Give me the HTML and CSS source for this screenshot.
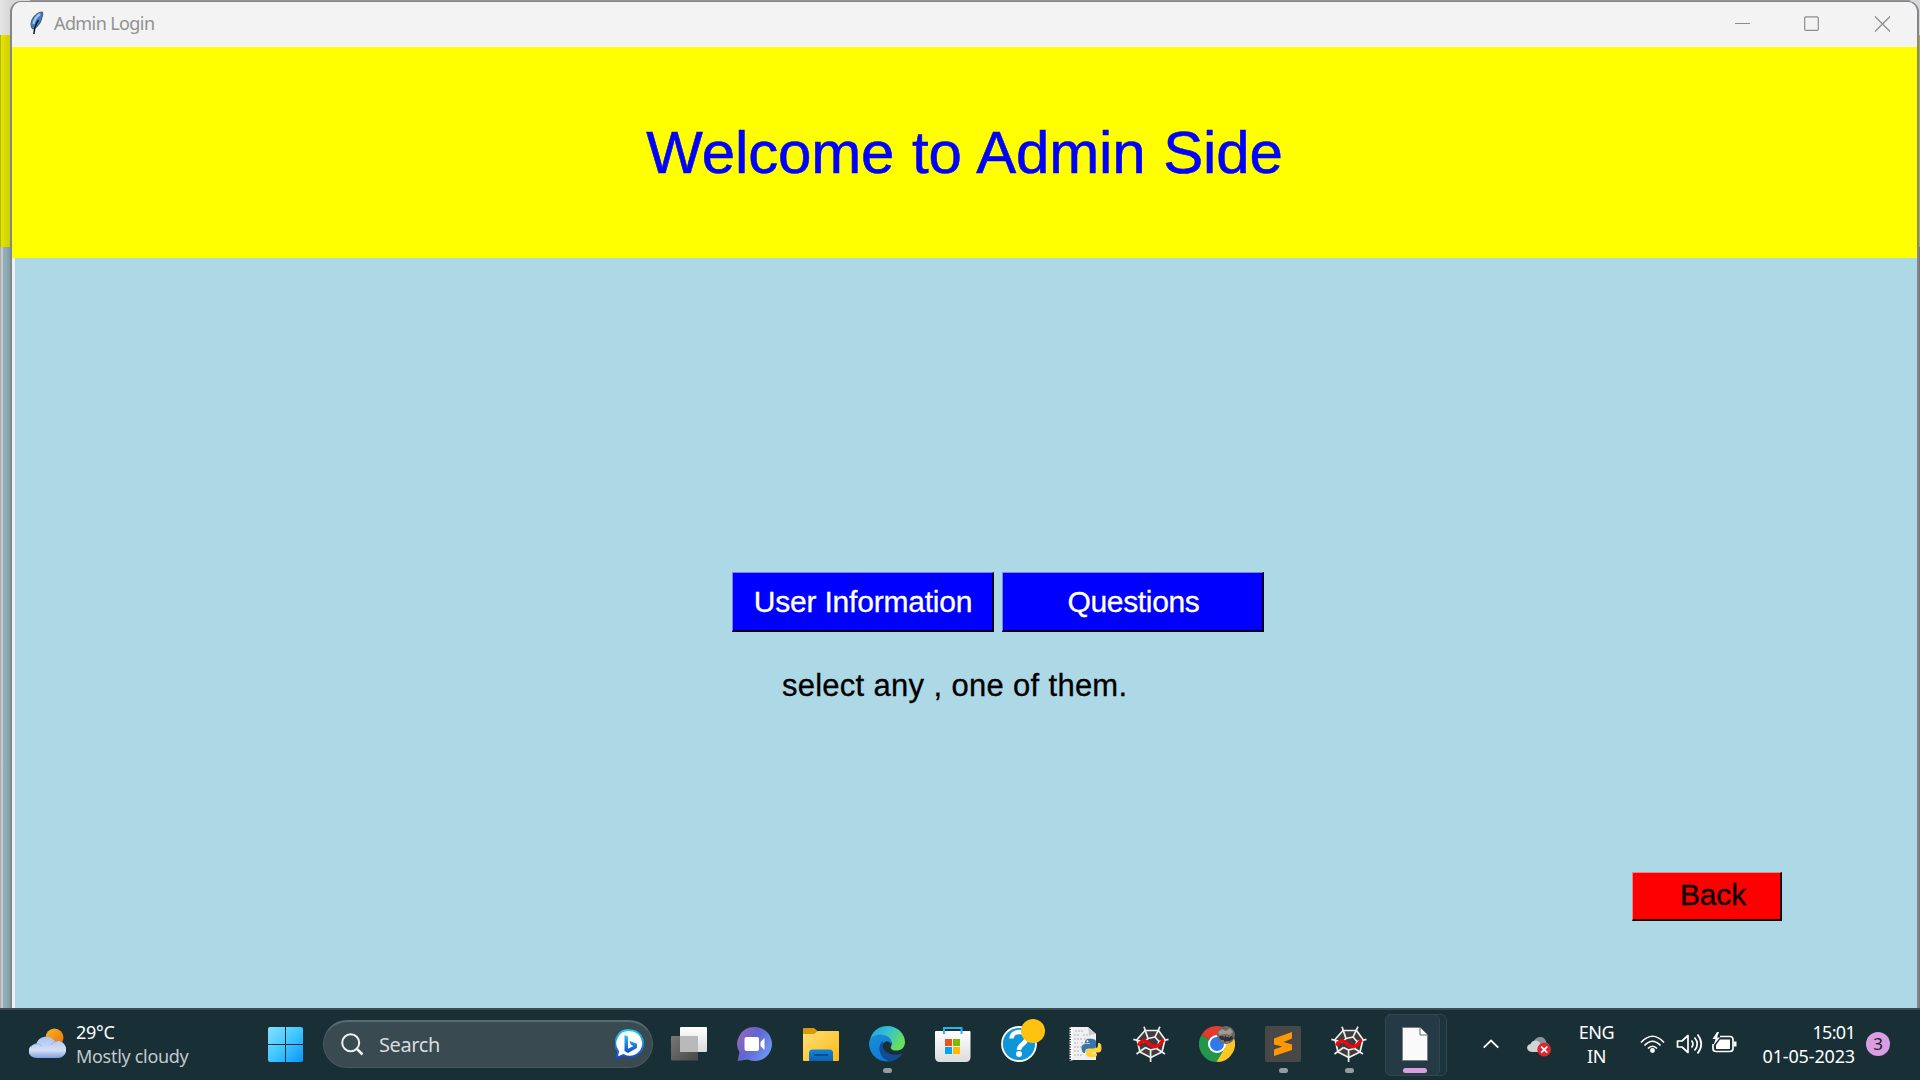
FILE: index.html
```html
<!DOCTYPE html>
<html lang="en">
<head>
<meta charset="utf-8">
<title>Admin Login</title>
<link rel="stylesheet" href="styles.css">
</head>
<body>
<svg class="defs" width="0" height="0" aria-hidden="true">
  <defs>
    <linearGradient id="sun" x1="0" y1="0" x2="1" y2="1"><stop offset="0" stop-color="#f7b925"/><stop offset="1" stop-color="#ee6a0a"/></linearGradient>
    <linearGradient id="cloud" x1="0" y1="0" x2="0" y2="1"><stop offset="0" stop-color="#a9c3f3"/><stop offset=".65" stop-color="#d3def5"/><stop offset="1" stop-color="#7f9de0"/></linearGradient>
    <linearGradient id="win" x1="0" y1="0" x2="35" y2="35" gradientUnits="userSpaceOnUse"><stop offset="0" stop-color="#86e0ff"/><stop offset=".5" stop-color="#3fc8ff"/><stop offset="1" stop-color="#0a94fb"/></linearGradient>
    <linearGradient id="bing" x1="0" y1="0" x2="0" y2="1"><stop offset="0" stop-color="#22c8e8"/><stop offset="1" stop-color="#1747cf"/></linearGradient>
    <linearGradient id="chat" x1="0" y1="0" x2="1" y2=".6"><stop offset="0" stop-color="#a56bb5"/><stop offset=".5" stop-color="#6264cf"/><stop offset="1" stop-color="#6d93ee"/></linearGradient>
    <linearGradient id="folder" x1="0" y1="0" x2="1" y2="1"><stop offset="0" stop-color="#ffdf78"/><stop offset="1" stop-color="#fdb913"/></linearGradient>
    <linearGradient id="pocket" x1="0" y1="0" x2="0" y2="1"><stop offset="0" stop-color="#1484dc"/><stop offset="1" stop-color="#0b62b4"/></linearGradient>
    <linearGradient id="edgeTop" x1="0" y1="0" x2="1" y2=".5"><stop offset="0" stop-color="#1c9ee0"/><stop offset=".5" stop-color="#35c1d0"/><stop offset="1" stop-color="#68e15a"/></linearGradient>
    <linearGradient id="edgeLeft" x1="0" y1="0" x2=".6" y2="1"><stop offset="0" stop-color="#1b8fd2"/><stop offset="1" stop-color="#0c78da"/></linearGradient>
    <linearGradient id="light" x1="0" y1="0" x2="0" y2="1"><stop offset="0" stop-color="#fff"/><stop offset="1" stop-color="#dcdcdc"/></linearGradient>
    <linearGradient id="dark" x1="0" y1="0" x2="1" y2="1"><stop offset="0" stop-color="#777"/><stop offset="1" stop-color="#484848"/></linearGradient>
    <symbol id="spyder" viewBox="0 0 36 36">
      <path d="M11.500 4.500h14l6.500 9-3 12.500-11.200 5.500L7 26 4 13.500z" fill="#403c3d"/>
      <g fill="none" stroke="#f0eeee" stroke-width="1.700" stroke-linejoin="round">
        <path d="M12 4.500h13.500l6.500 9-3 12.500-11.200 5.500L7 26 4 13.500zM15 12.500l7-1.500"/>
        <path d="M11 .7l4 11.800L11.500 16M27 .7l-5 10.300 4 4.500M35.500 13.300l-9.500 2.200-2.500 7.500M32 28l-8.500-5.500-5.900 1.500M17.600 36V24l-5.100-2.500M3.500 28l9-6.500M.3 13.300l11 2.700"/>
      </g>
      <path d="M5.300 19.500C10 12 13 15 17 18.500s8 2 10-.5 1.500-3 4-4" fill="none" stroke="#f50505" stroke-width="3.400"/>
    </symbol>
  </defs>
</svg>

<div class="desktop">
  <div class="rear"><div class="rear-title"></div><div class="rear-band"></div><div class="rear-body"></div></div>
  <main class="window">
    <header class="titlebar">
      <svg class="feather" width="14" height="24" viewBox="0 0 14 24"><path d="M12.500 1C8 1 2.500 5 1.200 11.500c-.5 3 .3 5.500 1.500 6.500 4-1 7.500-5 8.500-9 .8-3 2-5 1.300-8z" fill="#3f7fc8" stroke="#4a525a"/><path d="M10 3C6.500 5.500 4 9 3.500 13" fill="none" stroke="#9cc8f2" stroke-width="2.200"/><path d="M8.500 9C6 12.500 4.500 16 3.900 23" fill="none" stroke="#11161c" stroke-width="1.500"/></svg>
      <span class="caption">Admin Login</span>
      <svg class="controls" width="156" height="16" viewBox="0 0 156 16" fill="none" stroke="#8c8c8c" stroke-width="1.200"><path d="M0 7.500h15"/><rect x="69.700" y=".8" width="13.600" height="13.600" rx="1.200"/><path d="M140 .5l15 15m0-15l-15 15"/></svg>
    </header>
    <section class="banner"><h1>Welcome to Admin Side</h1></section>
    <section class="content">
      <div class="choices"><button>User Information</button><button class="questions">Questions</button></div>
      <p class="hint">select any , one of them.</p>
      <button class="back">Back</button>
    </section>
  </main>
</div>

<footer class="taskbar">
  <div class="weather">
    <svg width="37" height="32" viewBox="0 0 37 32"><circle cx="25.500" cy="9.500" r="9" fill="url(#sun)"/><path d="M8 30a8 7 0 0 1-.8-14A10.500 10.500 0 0 1 26 13.500 8.500 8.500 0 1 1 28 30z" fill="url(#cloud)"/><path d="M2 19c3-4 8-4 11-1M22 17c2-3 4-3.500 6-3.500" fill="none" stroke="#8eace8"/></svg>
    <div class="weather-text"><span>29°C</span><span class="muted">Mostly cloudy</span></div>
  </div>
  <svg class="start" width="35" height="35" viewBox="0 0 35 35" fill="url(#win)"><path d="M2 0h15v17H0V2q0-2 2-2zM18 0h15q2 0 2 2v15H18zM0 18h17v17H2q-2 0-2-2zM18 18h17v15q0 2-2 2H18z"/></svg>
  <div class="search">
    <svg width="23" height="23" viewBox="0 0 23 23" fill="none" stroke="#eef1f2" stroke-width="2"><circle cx="9.700" cy="9.700" r="8.500"/><path d="M16 16l5.500 5.500" stroke-width="2.500"/></svg>
    <span>Search</span>
    <svg class="bing" width="30" height="31" viewBox="0 0 30 31"><path d="M15 1.200a13.300 13.300 0 1 1-6.500 25L1.500 29l1.600-6.500A13.300 13.300 0 0 1 15 1.200z" fill="#fff" stroke="url(#bing)" stroke-width="2"/><path d="M9.500 6l3.500 1.500v12.200L18.500 17l-2.600-1.300-1.500-3.700 7.600 2.700v4.200L13 24l-3.500-2z" fill="url(#bing)"/></svg>
  </div>
  <nav class="apps">
    <div class="app"><svg width="36" height="36" viewBox="0 0 36 36"><rect x="0" y="10" width="27" height="24.500" rx="1" fill="url(#dark)"/><rect x="9" y="1" width="27" height="25" rx="1" fill="url(#light)"/><path d="M9 10h18v16H9z" fill="#b9b9b9"/></svg></div>
    <div class="app"><svg width="36" height="36" viewBox="0 0 36 36"><path d="M18 1a17 17 0 1 1-7 32.500L.5 35l2-8.500A17 17 0 0 1 18 1z" fill="url(#chat)"/><rect x="7.500" y="11" width="14.500" height="14" rx="2" fill="#fff"/><path d="M23.500 16l4-4v12l-4-4z" fill="#fff"/></svg></div>
    <div class="app"><svg width="36" height="36" viewBox="0 0 36 36"><path d="M0 3q0-1 1-1h10l4 3.500V12H0z" fill="#d99a05"/><path d="M0 8h11l4-3h20q1 0 1 1v28q0 1-1 1H1q-1 0-1-1z" fill="url(#folder)"/><path d="M6 35V27q0-3.500 3.500-3.500h17Q30 23.500 30 27v8z" fill="url(#pocket)"/><path d="M11 29h14" stroke="#064681" stroke-width="1.600"/></svg></div>
    <div class="app"><svg width="36" height="36" viewBox="0 0 36 36"><path d="M1 14C3 5 10 0 18 0c11 0 18 8 18 16 0 6-4 8.500-9 8.500-4 0-6-2-5-4 2-3 0-9-6-10z" fill="url(#edgeTop)"/><path d="M0 18C0 12 5 8.500 11 8.500c7 0 11.500 4 11.500 8l-1 1c-3-5-9-1-8.500 5 .5 8 8 11.500 14 10.500A18 18 0 0 1 0 18z" fill="url(#edgeLeft)"/><path d="M14 15c-6 4-5 17 7 20.500 5-.5 10-4 12.500-8.500-7 4-18 1-19.500-6-.5-2-.3-4 0-6z" fill="#104d93"/></svg><i class="dot"></i></div>
    <div class="app"><svg width="36" height="36" viewBox="0 0 36 36"><path d="M0 6q0-1 1-1h33.500q1 0 1 1v25q0 5-5 5H5q-5 0-5-5z" fill="url(#light)"/><path d="M9 8V2h17.500v6" fill="none" stroke="#29b4ea" stroke-width="2"/><path d="M10 13h7v7h-7z" fill="#f25022"/><path d="M18 13h7v7h-7z" fill="#7fba00"/><path d="M10 21h7v7h-7z" fill="#00a4ef"/><path d="M18 21h7v7h-7z" fill="#ffb900"/></svg></div>
    <div class="app"><svg class="spill" width="36" height="36" viewBox="0 0 36 36"><circle cx="18" cy="18" r="17" fill="#0e96d8" stroke="#fff" stroke-width="1.800"/><path d="M10.500 12.500C11 3.500 25.500 4 25.500 12c0 6-7.500 6-7.500 12" fill="none" stroke="#fff" stroke-width="4.500"/><circle cx="18" cy="28" r="3" fill="#fff"/><circle cx="32" cy="5" r="12" fill="#ffc20e"/></svg></div>
    <div class="app"><svg width="36" height="36" viewBox="0 0 36 36"><path d="M4 1h17l8 7v26H4z" fill="#f0f0f0"/><path d="M21 1l8 7-7 1z" fill="#ccc"/><path d="M4 1.500v33" stroke="#fff" stroke-width="3" stroke-dasharray="1.500 1"/><path d="M8 5h9M7 9h6m3 0h7M7 13h8m2 0h7M7 17h4m3 0h5M7 21h9M7 25h6m2 0h4M7 29h8" stroke="#b5b5b5" stroke-width="1.200" stroke-dasharray="2 1"/><path d="M18 20.500V16q0-3 4.500-3.200c5 0 6.500 1 6.500 3.200v4q0 3-3 3h-6q-2 0-2 4-3.500 0-3.500-5 0-3.500 3.500-4h5v-.8h-5" fill="#3776a8"/><path d="M31 17c3 0 3.500 2 3.500 5s-1 4.500-3.500 4.500h-6v1h5V29c0 1.500-2 2.300-5.500 2.300S19 30 19 28v-3q0-2.500 2.500-2.500h6Q31 22 31 19z" fill="#ffd43b"/><circle cx="20.500" cy="15.200" r="1" fill="#fff"/></svg></div>
    <div class="app"><svg width="36" height="36"><use href="#spyder"/></svg></div>
    <div class="app"><svg width="36" height="36" viewBox="0 0 36 36"><path d="M18 18L2.400 9A18 18 0 0 1 33.600 9z" fill="#e33b2e"/><path d="M18 18v18A18 18 0 0 1 2.400 9z" fill="#23964b"/><path d="M18 18L33.600 9A18 18 0 0 1 18 36l7.500-14z" fill="#fcc624"/><path d="M18 36l8-14-8-4z" fill="#23964b"/><path d="M17.500 36l8.500-14h8A18 18 0 0 1 17.500 36z" fill="#fcc624"/><circle cx="18" cy="18" r="9" fill="#fff"/><circle cx="18" cy="18" r="7" fill="#3079ed"/><circle cx="27" cy="9" r="9" fill="#6c6864"/><path d="M19 6l4-3 4 2 4-3 3 4-4 3-5-1-4 2z" fill="#a09a8c"/><path d="M20 11l3-3 2 4 3-4 2 4 3-3 1 4-5 3-6-1z" fill="#2b3142"/><path d="M22 9h2m3 1h2m2-1h2M22 15h3m2 1h3" stroke="#b57c6b" stroke-width="1.500"/></svg></div>
    <div class="app"><svg width="36" height="36" viewBox="0 0 36 36"><rect width="36" height="36" rx="2" fill="#484848"/><path d="M9 12.500L27 6v6.500L18.500 16 27 18.500V24L9 30v-6.500l8.500-3L9 18.500z" fill="#ff9800"/></svg><i class="dot"></i></div>
    <div class="app"><svg width="36" height="36"><use href="#spyder"/></svg><i class="dot"></i></div>
    <div class="app active"><svg width="36" height="36" viewBox="0 0 36 36"><path d="M5.500 1.500H23l7.500 7.500v25.500h-25z" fill="#fafafa" stroke="#777" stroke-width=".8"/><path d="M23 1.500V9h7.500" fill="#fff" stroke="#666"/></svg><i class="dot wide"></i></div>
  </nav>
  <div class="tray">
    <svg class="chevron" width="16" height="10" viewBox="0 0 16 10" fill="none" stroke="#fff" stroke-width="1.800"><path d="M.7 8.700L8 1.500l7.300 7.200"/></svg>
    <svg class="onedrive" width="25" height="21" viewBox="0 0 25 21"><path d="M6 8C7 0 18-2 19.500 7q4 1 2 6l-13-1z" fill="#8b9497"/><path d="M5 16C-1 16-1.500 9 3.500 8 6 3 12 4 13.500 8l6 4-4 4z" fill="#d1d4d5"/><circle cx="17.200" cy="13.600" r="6.900" fill="#dc252c"/><path d="M14.200 10.600l6 6m0-6l-6 6" stroke="#fff" stroke-width="1.800"/></svg>
    <div class="lang"><span>ENG</span><span>IN</span></div>
    <svg class="status" width="98" height="24" viewBox="0 0 98 24" fill="none" stroke="#fff" stroke-width="1.700"><path d="M1 10.500Q12.500-2 24 10.500M4.500 13.500Q12.500 5 20.500 13.500M8 16.500q4.500-4.500 9 0"/><circle cx="12.500" cy="18.500" r="1.600" fill="#fff"/><path d="M37.500 9H42l6-5.500v17L42 15h-4.500zM51.500 8.500q3 3.500 0 7M54.500 5.500q5.500 6.500 0 13M57.500 2.500q7.500 9.500 0 19" stroke-linejoin="round"/><path d="M80 4.500h10q3 0 3 3v9q0 3-3 3H76q-3 0-3-3V12"/><path d="M80 7.500h10v9.500H76v-4z" fill="#fff" stroke="none"/><path d="M94 9.500v5h2.500v-5z" fill="#fff" stroke="none"/><path d="M77 0l-4.500 7h3l-2 6.500 6.500-8h-3L79 0z" fill="#fff" stroke="none"/></svg>
    <div class="clock"><span class="time">15:01</span><span>01-05-2023</span></div>
    <span class="count">3</span>
  </div>
</footer>
</body>
</html>
```
FILE: styles.css
```css
* { box-sizing: border-box; }
html, body { margin: 0; height: 100%; }
body {
  width: 1920px;
  height: 1080px;
  overflow: hidden;
  display: flex;
  flex-direction: column;
  background: #949494;
  font-family: "Noto Sans", "Open Sans", sans-serif;
}
.defs { position: absolute; }
svg { display: block; flex: none; }

.desktop { height: 1008px; display: flex; position: relative; overflow: hidden; background: linear-gradient(#d8d8d8 0 35px, #b5b60a 35px 247px, #777 247px); }
.desktop::before { content: ""; position: absolute; inset: 0 10px auto 30px; height: 3px; background: #949494; }
.rear { width: 10px; display: flex; flex-direction: column; }
.rear-title { height: 35px; background: linear-gradient(90deg, #e4e4e4, #d8d8d8); }
.rear-band { height: 212px; background: linear-gradient(90deg, #b5b600 0 1px, #e4e500 1px, #cfd000); }
.rear-body { flex: 1; background: linear-gradient(90deg, #aaa 0 1px, #c8c8c8 1px 3px, #91b3be 3px, #819fa9); }

.window {
  position: relative;
  margin-top: 1px;
  width: 1909px;
  height: 1020px;
  display: flex;
  flex-direction: column;
  border: solid #85868a;
  border-width: 1px 2px 0;
  border-radius: 11px 11px 0 0;
  overflow: hidden;
  background: #add8e6;
}
.titlebar { height: 45px; display: flex; align-items: flex-start; padding: 9px 26px 0 18px; background: #f3f3f3; }
.caption { margin: 0 auto 0 10px; font-size: 18px; line-height: 24px; letter-spacing: -.6px; color: #919191; }
.controls { margin-top: 5px; }
.banner { height: 211px; display: flex; justify-content: center; background: #ff0; }
h1 { margin: 72px 0 0; font: 60px/68px "Liberation Sans", Arial, sans-serif; letter-spacing: -.15px; word-spacing: 1.2px; color: #00f; -webkit-text-stroke: .6px #00f; }
.content { flex: 1; display: flex; flex-direction: column; border-left: 3px solid #eef0f2; font-family: "Liberation Sans", Arial, sans-serif; }
.choices { display: flex; gap: 8px; margin: 314px 0 0 717px; }
button {
  width: 262px;
  height: 60px;
  padding: 1px 0 0 1px;
  border: solid;
  border-width: 1px 2px 2px 1px;
  border-color: #8080ff #00001a #00001a #8080ff;
  background: #00f;
  color: #fff;
  font: 30px/34px "Liberation Sans", Arial, sans-serif;
  letter-spacing: -.2px;
  -webkit-text-stroke: .3px currentColor;
}
.questions { letter-spacing: -.35px; padding-left: 2px; }
.hint { margin: 36px 0 0 767px; font-size: 31px; line-height: 36px; letter-spacing: .22px; word-spacing: .4px; color: #000; -webkit-text-stroke: .3px currentColor; }
.back { width: 150px; height: 49px; margin: 168px 0 0 1617px; padding: 0 0 2px 13px; border-color: #ff8080 #1a0000 #1a0000 #ff8080; background: #f00; color: #000; }

.taskbar {
  position: relative;
  height: 72px;
  display: flex;
  align-items: center;
  background: #182f36;
  box-shadow: inset 0 2px #3e4c52;
  color: #fff;
  font-size: 18px;
  line-height: 24px;
}
.weather { width: 268px; display: flex; align-items: center; gap: 10px; padding-left: 29px; letter-spacing: -.3px; }
.weather-text, .lang, .clock { display: flex; flex-direction: column; margin-top: -1px; }
.muted { color: #c3cacc; }
.search {
  width: 330px;
  height: 48px;
  margin-left: 20px;
  padding: 0 7px 0 17px;
  display: flex;
  align-items: center;
  gap: 15px;
  border: 1px solid #4a5a60;
  border-top: 2px solid #5b6a70;
  border-radius: 24px;
  background: #394a51;
  color: #d7dcde;
  font-size: 20px;
  letter-spacing: -.4px;
}
.bing { margin-left: auto; }
.apps { display: grid; grid-template-columns: repeat(12, 66px); margin-left: 3px; }
.app { position: relative; height: 60px; display: flex; align-items: center; justify-content: center; }
.spill { overflow: visible; }
.dot { position: absolute; left: 29px; bottom: 1px; width: 9px; height: 5px; border-radius: 3px; background: #929da2; }
.dot.wide { left: 21px; width: 24px; background: #da9fe2; }
.active::before, .active::after { content: ""; position: absolute; top: 0; left: 3px; width: 53px; height: 60px; border: 1px solid #31464f; border-radius: 6px; background: #243b45; }
.active::before { width: 60px; background: #1c343c; }
.active svg { position: relative; z-index: 1; }
.active .dot { z-index: 1; }
.tray { display: flex; align-items: center; flex: 1; padding-left: 35px; }
.onedrive { margin: 4px 0 0 28px; }
.lang { width: 45px; margin-left: 22px; align-items: center; letter-spacing: -.4px; margin-top: 0; }
.status { margin-left: 21px; }
.clock { width: 117px; align-items: flex-end; letter-spacing: -.15px; }
.time { letter-spacing: -.7px; }
.count { width: 24px; height: 24px; margin-left: 11px; border-radius: 50%; background: #da9de1; color: #202020; font-size: 17px; text-align: center; }
```
